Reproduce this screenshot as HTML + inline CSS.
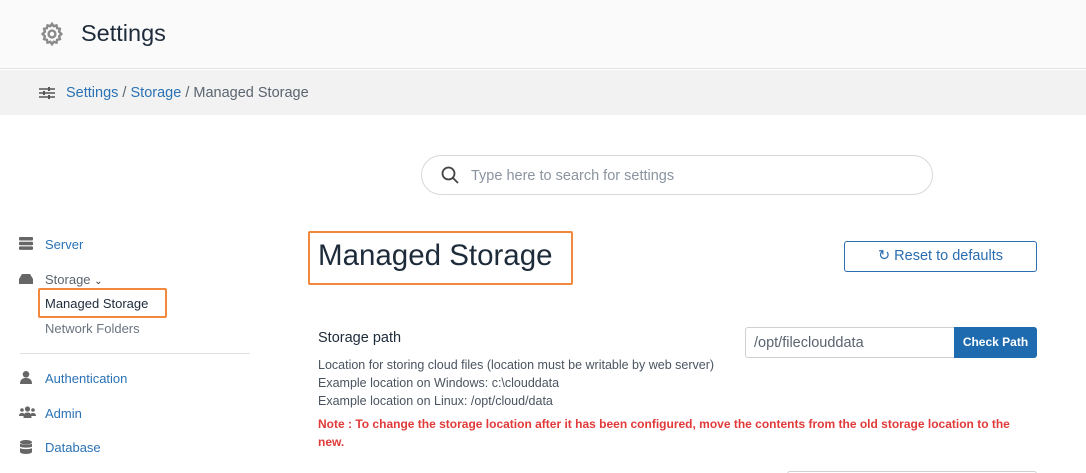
<!DOCTYPE html>
<html><head><style>
*{box-sizing:border-box;margin:0;padding:0}
html,body{width:1086px;height:473px;overflow:hidden}
body{background:#fff;font-family:"Liberation Sans",sans-serif;position:relative}
.a{position:absolute}
.hdr{left:0;top:0;width:1086px;height:69px;background:#fafafa;border-bottom:1px solid #e3e3e3}
.bc{left:0;top:70px;width:1086px;height:45px;background:#f2f2f2}
.blue{color:#2a72b5}
.side{font-size:13px}
</style></head><body>
<div class="a hdr"></div>
<svg class="a" style="left:40px;top:22px" width="24" height="24" viewBox="0 0 24 24" fill="none" stroke="#8a8a8a" stroke-width="2.4"><circle cx="12" cy="12" r="3.4"/><path d="M12 1.8l1.7 2.4 2.8-.8.6 2.8 2.8.7-.8 2.8 2.3 2.3-2.3 2.3.8 2.8-2.8.7-.6 2.8-2.8-.8L12 22.2l-1.7-2.4-2.8.8-.6-2.8-2.8-.7.8-2.8L2.6 12l2.3-2.3-.8-2.8 2.8-.7.6-2.8 2.8.8z"/></svg>
<div class="a" style="left:81px;top:20px;font-size:23.5px;color:#1d2b3a">Settings</div>
<div class="a bc"></div>
<svg class="a" style="left:39px;top:86px" width="16" height="14" viewBox="0 0 16 14" stroke="#555" stroke-width="1.5"><path d="M0 3h16M0 7h16M0 11h16"/><path d="M10 1v4M5 5v4M10 9v4" stroke-width="2"/></svg>
<div class="a" style="left:66px;top:85px;font-size:14.5px;color:#5a6470"><span class="blue">Settings</span> / <span class="blue">Storage</span> / Managed Storage</div>
<div class="a" style="left:421px;top:155px;width:512px;height:40px;border:1px solid #d8d8d8;border-radius:20px"></div>
<svg class="a" style="left:441px;top:166px" width="18" height="18" viewBox="0 0 18 18" fill="none" stroke="#444" stroke-width="1.8"><circle cx="7.5" cy="7.5" r="6"/><path d="M12 12l5 5"/></svg>
<div class="a" style="left:471px;top:168px;font-size:14.5px;color:#8a94a0">Type here to search for settings</div>
<svg class="a" style="left:19px;top:237px" width="14" height="13" viewBox="0 0 14 13" fill="#666"><rect y="0" width="14" height="3.5" rx="1"/><rect y="4.7" width="14" height="3.5" rx="1"/><rect y="9.4" width="14" height="3.5" rx="1"/></svg>
<div class="a side blue" style="left:45px;top:237px">Server</div>
<svg class="a" style="left:19px;top:274px" width="14" height="10" viewBox="0 0 14 10" fill="#666"><path d="M3 0h8l3 5v5H0V5z"/></svg>
<div class="a side" style="left:45px;top:272px;color:#5a6470">Storage <span style="font-size:10px;color:#333">&#8964;</span></div>
<div class="a" style="left:38px;top:288px;width:129px;height:30px;border:2px solid #f0883e;border-radius:2px"></div>
<div class="a side" style="left:45px;top:296px;color:#1d2b3a">Managed Storage</div>
<div class="a side" style="left:45px;top:321px;color:#6a7480">Network Folders</div>
<div class="a" style="left:20px;top:353px;width:230px;height:1px;background:#e0e0e0"></div>
<svg class="a" style="left:20px;top:371px" width="12" height="13" viewBox="0 0 12 13" fill="#666"><circle cx="6" cy="3.3" r="3.3"/><path d="M0 13c0-4 2-6 6-6s6 2 6 6z"/></svg>
<div class="a side blue" style="left:45px;top:371px">Authentication</div>
<svg class="a" style="left:19px;top:406px" width="17" height="12" viewBox="0 0 17 12" fill="#666"><circle cx="8.5" cy="3" r="2.6"/><circle cx="3" cy="4" r="1.8"/><circle cx="14" cy="4" r="1.8"/><path d="M4.5 12c0-4 1.5-5.5 4-5.5s4 1.5 4 5.5zM0 10c0-2 1-3 3-3s3 1 3 3zM11 10c0-2 1-3 3-3s3 1 3 3z"/></svg>
<div class="a side blue" style="left:45px;top:406px">Admin</div>
<svg class="a" style="left:20px;top:440px" width="12" height="14" viewBox="0 0 12 14" fill="#666"><ellipse cx="6" cy="2.2" rx="6" ry="2.2"/><path d="M0 3.5c1 1.5 11 1.5 12 0v3c-1 1.5-11 1.5-12 0zM0 8c1 1.5 11 1.5 12 0v3.8c0 1.3-2.5 2.2-6 2.2S0 13.1 0 11.8z"/></svg>
<div class="a side blue" style="left:45px;top:440px">Database</div>
<div class="a" style="left:308px;top:231px;width:265px;height:54px;border:2px solid #f0883e;border-radius:2px"></div>
<div class="a" style="left:318px;top:239px;font-size:29.5px;color:#1d2b3a">Managed Storage</div>
<div class="a" style="left:844px;top:241px;width:193px;height:31px;border:1px solid #2a6db0;border-radius:3px;color:#2a6db0;font-size:14.5px;text-align:center;line-height:29px">&#8635; Reset to defaults</div>
<div class="a" style="left:318px;top:330px;font-size:14.5px;color:#1d2b3a">Storage path</div>
<div class="a" style="left:318px;top:356px;font-size:12.5px;color:#4a5460;line-height:18px">Location for storing cloud files (location must be writable by web server)<br>Example location on Windows: c:\clouddata<br>Example location on Linux: /opt/cloud/data</div>
<div class="a" style="left:318px;top:415px;width:720px;font-size:12px;color:#e03a3a;font-weight:bold;line-height:18px">Note : To change the storage location after it has been configured, move the contents from the old storage location to the new.</div>
<div class="a" style="left:745px;top:327px;width:212px;height:31px;border:1px solid #d0d0d0;border-radius:3px 0 0 3px;font-size:14.5px;color:#5a6470;padding:7px 8px">/opt/fileclouddata</div>
<div class="a" style="left:954px;top:327px;width:83px;height:31px;background:#1e6bb0;border-radius:0 3px 3px 0;color:#fff;font-size:12px;font-weight:bold;text-align:center;line-height:31px">Check Path</div>
<div class="a" style="left:787px;top:471px;width:250px;height:10px;border:1px solid #d0d0d0;border-radius:3px"></div>
</body></html>
